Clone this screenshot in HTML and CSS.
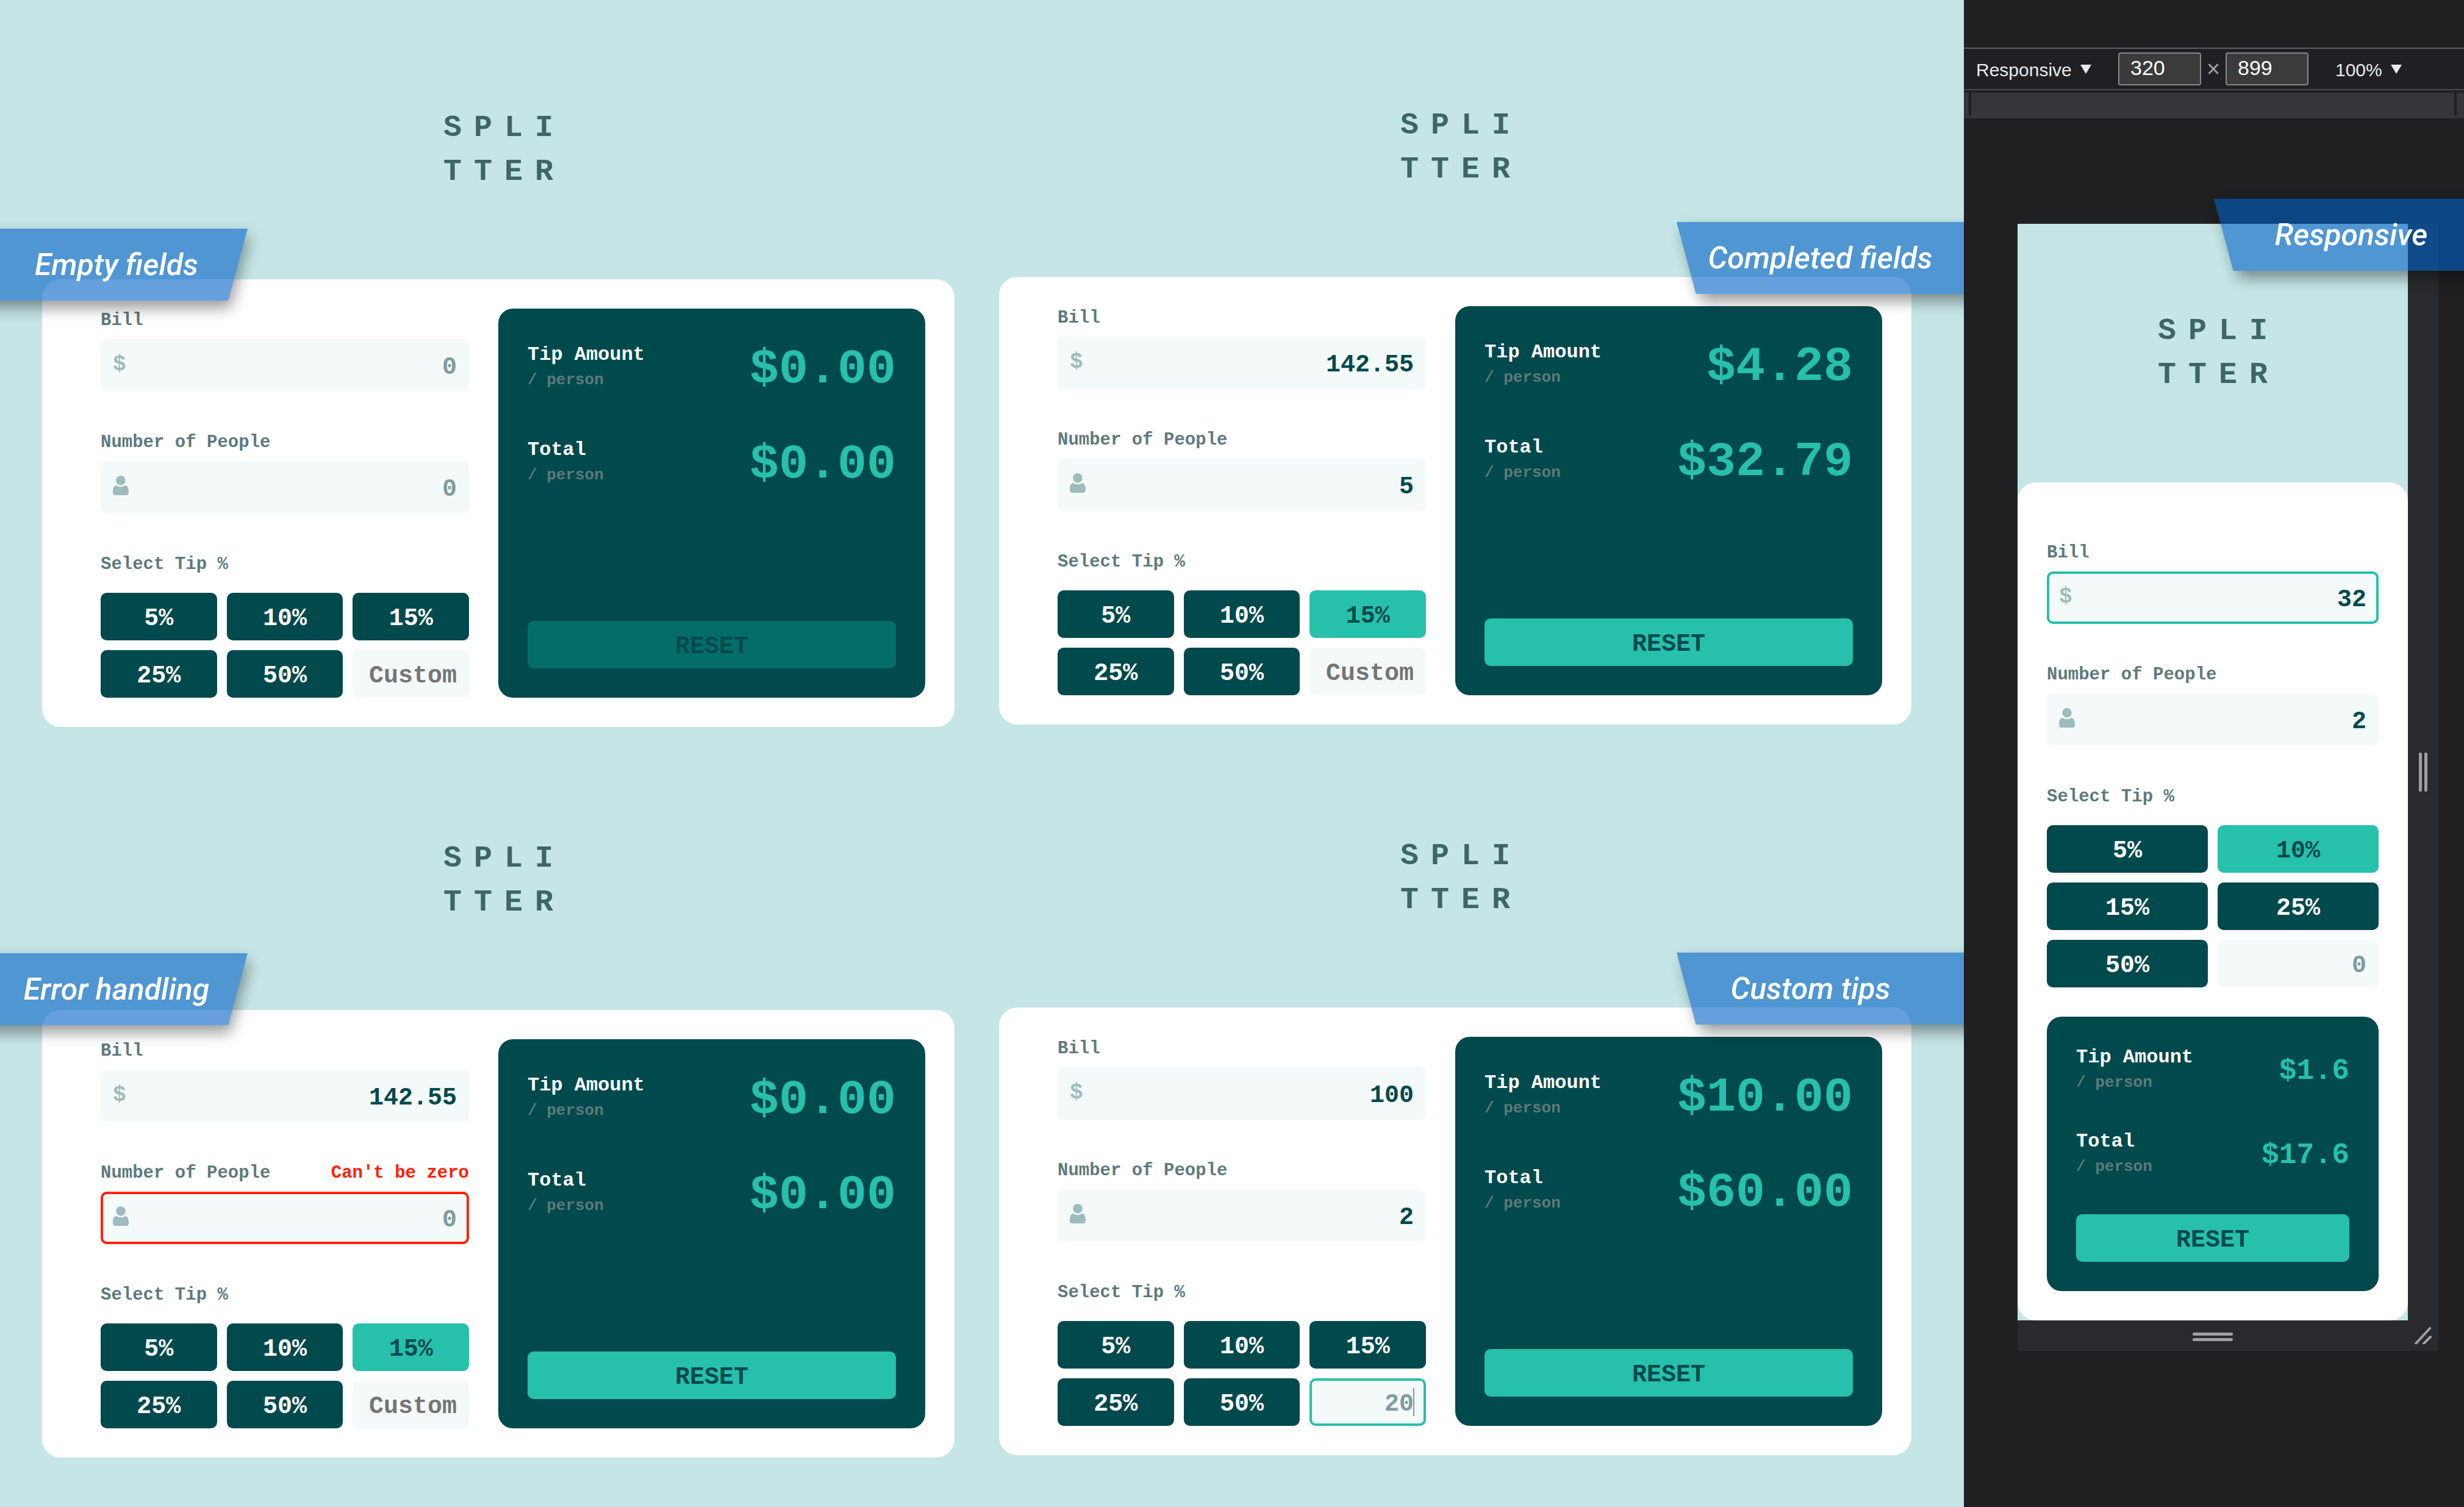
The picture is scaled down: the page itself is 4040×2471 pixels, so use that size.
FILE: index.html
```
<!DOCTYPE html>
<html lang="en">
<head>
<meta charset="utf-8">
<meta name="viewport" content="width=device-width, initial-scale=1">
<title>Splitter – tip calculator states</title>
<link rel="stylesheet" href="styles.css">
</head>
<body>
<svg class="sprite" aria-hidden="true">
  <symbol id="icon-person" viewBox="0 0 26 32">
    <circle cx="13" cy="7.700" r="7.700"/>
    <path d="M5.500 16Q13 20.500 20.500 16C24.500 16 26 21.500 26 27Q26 32 22 32H4Q0 32 0 27C0 21.500 1.500 16 5.500 16Z"/>
  </symbol>
  <symbol id="icon-arrow" viewBox="0 0 18 15">
    <path d="M0 0H18L9 15Z"/>
  </symbol>
</svg>

<div class="board">
  <main class="scenes">
    <div class="column">
      <section class="scene">
        <h1 class="logo">SPLI<br>TTER</h1>
        <form class="card">
          <div class="form">
            <div class="field">
              <div class="field-head"><label for="bill-1">Bill</label></div>
              <div class="control"><span class="dollar">$</span><input class="input" id="bill-1" type="text" inputmode="decimal" placeholder="0"></div>
            </div>
            <div class="field">
              <div class="field-head"><label for="people-1">Number of People</label></div>
              <div class="control"><svg class="person"><use href="#icon-person"/></svg><input class="input" id="people-1" type="text" inputmode="numeric" placeholder="0"></div>
            </div>
            <div class="tips-field">
              <label class="tips-label" for="custom-1">Select Tip %</label>
              <div class="tips">
                <button class="tip" type="button">5%</button>
                <button class="tip" type="button">10%</button>
                <button class="tip" type="button">15%</button>
                <button class="tip" type="button">25%</button>
                <button class="tip" type="button">50%</button>
                <div class="custom"><input class="input input--custom" id="custom-1" type="text" placeholder="Custom"></div>
              </div>
            </div>
          </div>
          <div class="results">
            <div class="result"><div class="result-text"><p class="result-name">Tip Amount</p><p class="result-per">/ person</p></div><output class="amount">$0.00</output></div>
            <div class="result"><div class="result-text"><p class="result-name">Total</p><p class="result-per">/ person</p></div><output class="amount">$0.00</output></div>
            <button class="reset" type="reset" disabled>RESET</button>
          </div>
        </form>
        <p class="ribbon ribbon--left ribbon--empty"><span>Empty fields</span></p>
      </section>

      <section class="scene">
        <h1 class="logo">SPLI<br>TTER</h1>
        <form class="card">
          <div class="form">
            <div class="field">
              <div class="field-head"><label for="bill-3">Bill</label></div>
              <div class="control"><span class="dollar">$</span><input class="input" id="bill-3" type="text" inputmode="decimal" placeholder="0" value="142.55"></div>
            </div>
            <div class="field">
              <div class="field-head"><label for="people-3">Number of People</label><span class="error" id="people-error">Can't be zero</span></div>
              <div class="control"><svg class="person"><use href="#icon-person"/></svg><input class="input input--error" id="people-3" type="text" inputmode="numeric" placeholder="0" aria-invalid="true" aria-describedby="people-error"></div>
            </div>
            <div class="tips-field">
              <label class="tips-label" for="custom-3">Select Tip %</label>
              <div class="tips">
                <button class="tip" type="button">5%</button>
                <button class="tip" type="button">10%</button>
                <button class="tip tip--active" type="button">15%</button>
                <button class="tip" type="button">25%</button>
                <button class="tip" type="button">50%</button>
                <div class="custom"><input class="input input--custom" id="custom-3" type="text" placeholder="Custom"></div>
              </div>
            </div>
          </div>
          <div class="results">
            <div class="result"><div class="result-text"><p class="result-name">Tip Amount</p><p class="result-per">/ person</p></div><output class="amount">$0.00</output></div>
            <div class="result"><div class="result-text"><p class="result-name">Total</p><p class="result-per">/ person</p></div><output class="amount">$0.00</output></div>
            <button class="reset" type="reset">RESET</button>
          </div>
        </form>
        <p class="ribbon ribbon--left ribbon--error"><span>Error handling</span></p>
      </section>
    </div>

    <div class="column column--right">
      <section class="scene">
        <h1 class="logo">SPLI<br>TTER</h1>
        <form class="card">
          <div class="form">
            <div class="field">
              <div class="field-head"><label for="bill-2">Bill</label></div>
              <div class="control"><span class="dollar">$</span><input class="input" id="bill-2" type="text" inputmode="decimal" placeholder="0" value="142.55"></div>
            </div>
            <div class="field">
              <div class="field-head"><label for="people-2">Number of People</label></div>
              <div class="control"><svg class="person"><use href="#icon-person"/></svg><input class="input" id="people-2" type="text" inputmode="numeric" placeholder="0" value="5"></div>
            </div>
            <div class="tips-field">
              <label class="tips-label" for="custom-2">Select Tip %</label>
              <div class="tips">
                <button class="tip" type="button">5%</button>
                <button class="tip" type="button">10%</button>
                <button class="tip tip--active" type="button">15%</button>
                <button class="tip" type="button">25%</button>
                <button class="tip" type="button">50%</button>
                <div class="custom"><input class="input input--custom" id="custom-2" type="text" placeholder="Custom"></div>
              </div>
            </div>
          </div>
          <div class="results">
            <div class="result"><div class="result-text"><p class="result-name">Tip Amount</p><p class="result-per">/ person</p></div><output class="amount">$4.28</output></div>
            <div class="result"><div class="result-text"><p class="result-name">Total</p><p class="result-per">/ person</p></div><output class="amount">$32.79</output></div>
            <button class="reset" type="reset">RESET</button>
          </div>
        </form>
        <p class="ribbon ribbon--right"><span>Completed fields</span></p>
      </section>

      <section class="scene">
        <h1 class="logo">SPLI<br>TTER</h1>
        <form class="card">
          <div class="form">
            <div class="field">
              <div class="field-head"><label for="bill-4">Bill</label></div>
              <div class="control"><span class="dollar">$</span><input class="input" id="bill-4" type="text" inputmode="decimal" placeholder="0" value="100"></div>
            </div>
            <div class="field">
              <div class="field-head"><label for="people-4">Number of People</label></div>
              <div class="control"><svg class="person"><use href="#icon-person"/></svg><input class="input" id="people-4" type="text" inputmode="numeric" placeholder="0" value="2"></div>
            </div>
            <div class="tips-field">
              <label class="tips-label" for="custom-4">Select Tip %</label>
              <div class="tips">
                <button class="tip" type="button">5%</button>
                <button class="tip" type="button">10%</button>
                <button class="tip" type="button">15%</button>
                <button class="tip" type="button">25%</button>
                <button class="tip" type="button">50%</button>
                <div class="custom custom--typing"><input class="input input--custom input--focus" id="custom-4" type="text" placeholder="Custom" value="20"></div>
              </div>
            </div>
          </div>
          <div class="results">
            <div class="result"><div class="result-text"><p class="result-name">Tip Amount</p><p class="result-per">/ person</p></div><output class="amount">$10.00</output></div>
            <div class="result"><div class="result-text"><p class="result-name">Total</p><p class="result-per">/ person</p></div><output class="amount">$60.00</output></div>
            <button class="reset" type="reset">RESET</button>
          </div>
        </form>
        <p class="ribbon ribbon--right ribbon--custom"><span>Custom tips</span></p>
      </section>
    </div>
  </main>

  <aside class="devtools">
    <div class="toolbar">
      <div class="picker">
        <select aria-label="Device"><option>Responsive</option></select>
        <svg class="arrow"><use href="#icon-arrow"/></svg>
      </div>
      <div class="size">
        <input class="dimension" type="text" value="320" aria-label="Width">
        <span class="times">×</span>
        <input class="dimension" type="text" value="899" aria-label="Height">
      </div>
      <div class="picker">
        <select aria-label="Zoom"><option>100%</option></select>
        <svg class="arrow"><use href="#icon-arrow"/></svg>
      </div>
    </div>
    <div class="ruler"><div class="ruler-span"></div></div>

    <div class="device">
      <div class="screen">
        <h1 class="logo">SPLI<br>TTER</h1>
        <form class="card card--mobile">
          <div class="form">
            <div class="field">
              <div class="field-head"><label for="bill-5">Bill</label></div>
              <div class="control"><span class="dollar">$</span><input class="input input--focus" id="bill-5" type="text" inputmode="decimal" placeholder="0" value="32"></div>
            </div>
            <div class="field">
              <div class="field-head"><label for="people-5">Number of People</label></div>
              <div class="control"><svg class="person"><use href="#icon-person"/></svg><input class="input" id="people-5" type="text" inputmode="numeric" placeholder="0" value="2"></div>
            </div>
            <div class="tips-field">
              <label class="tips-label" for="custom-5">Select Tip %</label>
              <div class="tips">
                <button class="tip" type="button">5%</button>
                <button class="tip tip--active" type="button">10%</button>
                <button class="tip" type="button">15%</button>
                <button class="tip" type="button">25%</button>
                <button class="tip" type="button">50%</button>
                <div class="custom"><input class="input input--custom" id="custom-5" type="text" placeholder="Custom" value="0"></div>
              </div>
            </div>
          </div>
          <div class="results">
            <div class="result"><div class="result-text"><p class="result-name">Tip Amount</p><p class="result-per">/ person</p></div><output class="amount">$1.6</output></div>
            <div class="result"><div class="result-text"><p class="result-name">Total</p><p class="result-per">/ person</p></div><output class="amount">$17.6</output></div>
            <button class="reset" type="reset">RESET</button>
          </div>
        </form>
      </div>
      <div class="grip grip--right"><i></i><i></i></div>
      <div class="grip grip--bottom"><i></i><i></i></div>
      <div class="grip">
        <svg class="corner" viewBox="0 0 28 28"><path d="M2 27L25 2M15 27L26 16"/></svg>
      </div>
    </div>
    <p class="ribbon ribbon--right ribbon--device"><span>Responsive</span></p>
  </aside>
</div>
</body>
</html>
```

FILE: styles.css
```
:root {
  --mint: #c5e5e6;
  --deep: #00494d;
  --teal: #26c0ab;
  --label: #5e7a7d;
  --muted: #7f9c9f;
  --field: #f4fafa;
  --error: #ff2106;
  --mono: "Liberation Mono", "Courier New", monospace;
}

* {
  box-sizing: border-box;
}

body,
h1,
p {
  margin: 0;
}

body {
  background: var(--mint);
  font-family: var(--mono);
  font-weight: 700;
}

input,
button,
select {
  margin: 0;
  border: 0;
  font: inherit;
  outline: 0;
}

.sprite {
  display: none;
}

.board {
  display: grid;
  grid-template-columns: minmax(0, 1fr) 820px;
  min-height: 100vh;
}

/* Desktop states */

.scenes {
  display: grid;
  grid-template-columns: 1636fr 1584fr;
  padding-bottom: 80px;
}

.column {
  display: flex;
  flex-direction: column;
  gap: 180px;
  padding-top: 174px;
}

.column--right {
  padding-top: 170px;
}

.scene {
  position: relative;
  display: flex;
  flex-direction: column;
  gap: 140px;
  padding: 0 71px 0 69px;
}

.column--right .scene {
  padding: 0 86px 0 2px;
}

.logo {
  padding-left: 20px;
  color: #3d6666;
  font-size: 50px;
  line-height: 72px;
  letter-spacing: 20px;
  text-align: center;
}

.card {
  display: grid;
  grid-template-columns: minmax(0, 652fr) minmax(0, 700fr);
  gap: 48px;
  padding: 48px;
  border-radius: 30px;
  background: #fff;
}

.form {
  display: flex;
  flex-direction: column;
  gap: 64px;
  padding-left: 48px;
}

.field {
  display: flex;
  flex-direction: column;
  gap: 14px;
}

.field-head,
.tips-label {
  display: flex;
  justify-content: space-between;
  padding-top: 4px;
  color: var(--label);
  font-size: 29px;
  line-height: 32px;
}

.error {
  color: var(--error);
}

.control,
.custom {
  position: relative;
  display: flex;
}

.dollar,
.person {
  position: absolute;
  left: 20px;
  color: #9ebbbd;
}

.dollar {
  top: 22px;
  font-size: 36px;
  line-height: 40px;
}

.person {
  top: 24px;
  width: 26px;
  height: 32px;
  fill: currentColor;
}

.input {
  width: 100%;
  min-width: 0;
  height: 86px;
  padding: 6px 16px 0;
  border: 4px solid transparent;
  border-radius: 10px;
  background: var(--field);
  color: var(--deep);
  font-size: 40px;
  text-align: right;
}

.input::placeholder {
  color: var(--muted);
  opacity: 1;
}

.input--custom {
  height: 78px;
  color: var(--muted);
}

.input--custom::placeholder {
  color: #757575;
}

.input--error {
  border-color: var(--error);
}

.input--focus {
  border-color: var(--teal);
}

.custom--typing::after {
  content: "";
  position: absolute;
  top: 16px;
  right: 19px;
  width: 2px;
  height: 46px;
  background: var(--muted);
}

.tips-field {
  display: flex;
  flex-direction: column;
  gap: 30px;
}

.tips {
  display: grid;
  grid-template-columns: repeat(3, minmax(0, 1fr));
  gap: 16px;
}

.tip,
.reset {
  height: 78px;
  padding: 6px 0 0;
  border-radius: 10px;
  font-size: 40px;
}

.tip {
  background: var(--deep);
  color: #fff;
}

.tip--active,
.reset {
  background: var(--teal);
  color: var(--deep);
}

.reset {
  margin-top: auto;
}

.reset:disabled {
  background: #056d68;
}

.results {
  display: flex;
  flex-direction: column;
  gap: 64px;
  padding: 48px;
  border-radius: 24px;
  background: var(--deep);
}

.result {
  display: flex;
  align-items: center;
  justify-content: space-between;
}

.result-text {
  display: flex;
  flex-direction: column;
  gap: 8px;
}

.result-name {
  color: #fff;
  font-size: 32px;
  line-height: 38px;
}

.result-per {
  color: var(--label);
  font-size: 26px;
  line-height: 28px;
}

.amount {
  padding-top: 12px;
  color: var(--teal);
  font-size: 80px;
  line-height: 80px;
}

/* Ribbons: the slanted plate runs past the edge that it hangs from */

.ribbon {
  position: absolute;
  display: flex;
  align-items: center;
  justify-content: center;
  height: 118px;
  color: #fff;
  font: italic 500 50px/56px Roboto, sans-serif;
}

.ribbon::before {
  content: "";
  position: absolute;
  inset: 0;
  background: rgba(0, 97, 198, .6);
  box-shadow: 6px 12px 24px rgba(0, 0, 0, .4);
}

.ribbon span {
  position: relative;
}

.ribbon--left {
  left: 0;
  width: 406px;
  padding-right: 24px;
}

.ribbon--left::before {
  left: -80px;
  transform: skewX(-15deg);
  transform-origin: top right;
}

.ribbon--right {
  top: 194px;
  right: 0;
  width: 471px;
}

.ribbon--right::before {
  right: -80px;
  transform: skewX(15deg);
  transform-origin: top left;
}

.ribbon--empty {
  top: 201px;
}

.ribbon--error {
  top: 191px;
}

.ribbon--custom {
  padding-right: 32px;
}

/* Device preview */

.devtools {
  position: relative;
  padding-top: 78px;
  overflow: hidden;
  background: #202022;
}

.toolbar {
  display: flex;
  align-items: center;
  gap: 44px;
  height: 70px;
  padding-left: 20px;
  border-top: 2px solid #5f6063;
  border-bottom: 2px solid #494a4e;
  background: #202024;
  font: 400 30px/36px "Liberation Sans", Arial, sans-serif;
}

.picker {
  display: flex;
  align-items: center;
  gap: 14px;
}

.picker select {
  appearance: none;
  padding: 4px 0 0;
  background: none;
  color: #e8eaed;
}

.arrow {
  width: 18px;
  height: 15px;
  fill: #e8eaed;
}

.size {
  display: flex;
  align-items: center;
}

.dimension {
  width: 136px;
  height: 54px;
  padding: 0 18px 4px;
  border: 2px solid #87888a;
  border-radius: 4px;
  background: #3b3b3b;
  color: #fff;
  font-size: 34px;
}

.times {
  width: 40px;
  color: #9aa0a6;
  font-size: 38px;
  text-align: center;
}

.ruler {
  height: 46px;
  padding: 0 12px 4px 8px;
  border-top: 4px solid #202024;
  background: #35363a;
}

.ruler-span {
  height: 38px;
  border: solid #202024;
  border-width: 0 4px;
}

.device {
  display: grid;
  grid-template-columns: 640px 50px;
  grid-template-rows: auto 50px;
  width: max-content;
  margin: 173px 0 0 88px;
}

.screen {
  display: flex;
  flex-direction: column;
  gap: 140px;
  padding-top: 140px;
  background: var(--mint);
}

.card--mobile {
  grid-template-columns: minmax(0, 1fr);
}

.card--mobile .form {
  padding: 48px 0 0;
}

.card--mobile .tips {
  grid-template-columns: repeat(2, minmax(0, 1fr));
}

.card--mobile .amount {
  padding-top: 8px;
  font-size: 48px;
  line-height: 56px;
}

.grip {
  display: flex;
  align-items: center;
  justify-content: center;
  gap: 4px;
  background: #292a2e;
}

.grip i {
  width: 5px;
  height: 64px;
  border-radius: 2px;
  background: #a0a0a0;
}

.grip--bottom {
  flex-direction: column;
  padding-top: 4px;
}

.grip--bottom i {
  width: 66px;
  height: 5px;
}

.corner {
  width: 28px;
  height: 28px;
  fill: none;
  stroke: #a0a0a0;
  stroke-width: 4;
  stroke-linecap: round;
}

.ribbon--device {
  top: 326px;
  width: 410px;
  padding-left: 40px;
}
```
